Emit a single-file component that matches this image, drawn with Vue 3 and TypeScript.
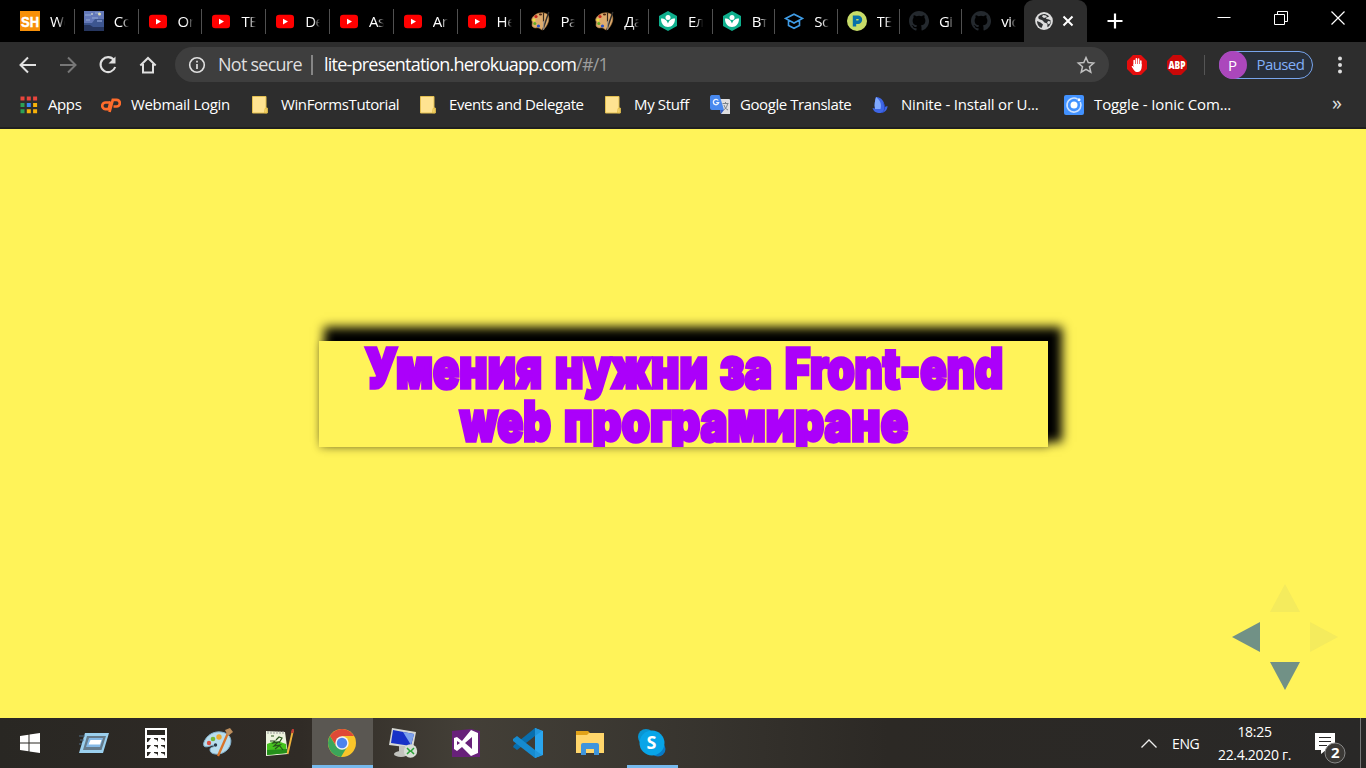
<script setup lang="ts">
interface Tab { icon: string; title: string; width: number }
interface Bookmark { icon: string; title: string; width: number; spacing: number }
interface Word { text: string; x: number; width: number }

const tabs: Tab[] = [
  { icon: 'sh', title: 'We', width: 63.8 },
  { icon: 'sky', title: 'Co', width: 63.8 },
  { icon: 'youtube', title: 'On', width: 63.8 },
  { icon: 'youtube', title: 'TE', width: 63.8 },
  { icon: 'youtube', title: 'De', width: 63.8 },
  { icon: 'youtube', title: 'As', width: 63.8 },
  { icon: 'youtube', title: 'An', width: 63.8 },
  { icon: 'youtube', title: 'He', width: 63.8 },
  { icon: 'palette', title: 'Pa', width: 63.8 },
  { icon: 'palette', title: 'Да', width: 63.8 },
  { icon: 'leaf', title: 'Ел', width: 63.8 },
  { icon: 'leaf', title: 'Вт', width: 62.4 },
  { icon: 'school', title: 'Sc', width: 62.4 },
  { icon: 'parking', title: 'TE', width: 62.4 },
  { icon: 'github', title: 'Gi', width: 62.4 },
  { icon: 'github', title: 'vic', width: 62.4 },
]

const bookmarks: Bookmark[] = [
  { icon: 'apps', title: 'Apps', width: 82, spacing: -0.4 },
  { icon: 'cpanel', title: 'Webmail Login', width: 150, spacing: -0.33 },
  { icon: 'folder', title: 'WinFormsTutorial', width: 168, spacing: -0.4 },
  { icon: 'folder', title: 'Events and Delegate', width: 185, spacing: -0.4 },
  { icon: 'folder', title: 'My Stuff', width: 106, spacing: -0.35 },
  { icon: 'translate', title: 'Google Translate', width: 161, spacing: -0.43 },
  { icon: 'ninite', title: 'Ninite - Install or U...', width: 193, spacing: -0.18 },
  { icon: 'ionic', title: 'Toggle - Ionic Com...', width: 180, spacing: -0.13 },
]

const heading: Word[][] = [
  [
    { text: 'Умения', x: 45, width: 179 },
    { text: 'нужни', x: 235, width: 155 },
    { text: 'за', x: 400, width: 54 },
    { text: 'Front-end', x: 465, width: 220 },
  ],
  [
    { text: 'web', x: 140, width: 93 },
    { text: 'програмиране', x: 244, width: 346 },
  ],
]
</script>

<template>
  <svg class="defs" aria-hidden="true">
    <defs>
      <symbol id="sh" viewBox="0 0 20 20"><rect width="20" height="20" fill="#f79009" /><text x="1" y="15.5" font-family="Liberation Sans" font-weight="700" font-size="15" textLength="18" lengthAdjust="spacingAndGlyphs" fill="#fff" stroke="#fff" stroke-width=".5">SH</text></symbol>
      <symbol id="sky" viewBox="0 0 20 20"><rect width="20" height="20" fill="#6378b8" /><path d="M0 12h8l3-4h9v12H0z" fill="#3d5690" /><path d="M0 14h6l3 2h11v4H0z" fill="#26365f" /><path d="M1 4h6M8 7h6M11 2h5M2 9h4M13 10h5" stroke="#8499cb" stroke-width="1.5" /><circle cx="15.500" cy="3" r="1.500" fill="#e1dfb0" /><circle cx="8" cy="3" r="1" fill="#c5cbd0" /></symbol>
      <symbol id="youtube" viewBox="0 0 20 20"><rect x="1" y="3.800" width="18" height="13.500" rx="3.300" fill="#f00" /><path d="M8 7.800v5.600l5-2.800z" fill="#fff" /></symbol>
      <symbol id="palette" viewBox="0 0 20 20"><path d="M5 4C9 1 15 1 18 4c2 4 0 10-4 14-2 2-3 0-5-1-3-1-3 1-6-1-2-1 0-4-1-6-1-1 0-4 3-6z" fill="#deac6e" stroke="#b98143" stroke-width=".6" /><circle cx="6" cy="5.500" r="1.600" fill="#c8281c" /><ellipse cx="10.500" cy="3.500" rx="1.600" ry="1" fill="#4d2512" /><circle cx="4" cy="9" r="1.500" fill="#eee43c" /><circle cx="4.800" cy="12.500" r="1.500" fill="#65ac25" /><circle cx="8.500" cy="15" r="1.600" fill="#2852c8" /><path d="M13.500 2v9" stroke="#37291d" stroke-width="1.200" /><path d="M18.800 1l-4 12-2 6" fill="none" stroke="#33302d" stroke-width="1.500" /><path d="M13.700 10v9" stroke="#99918a" stroke-width="1" /></symbol>
      <symbol id="leaf" viewBox="0 0 20 20"><path d="M10 0l9 5v10l-9 5-9-5V5z" fill="#0eaf8d" /><circle cx="10" cy="6.500" r="2.500" fill="#fff" /><path d="M3 7.500c4 0 6 2 7 5 1-3 3-5 7-5 0 5.500-3 8.500-7 8.500s-7-3-7-8.500z" fill="#fff" /></symbol>
      <symbol id="school" viewBox="0 0 20 20"><path d="M1.500 7.500L10 3.200l8.500 4.300L10 12zM4.500 9.500v5L10 17.300l5.500-2.800v-5" fill="none" stroke="#3f9ce6" stroke-width="1.600" /></symbol>
      <symbol id="parking" viewBox="0 0 20 20"><circle cx="10" cy="10" r="10" fill="#c7dc68" /><path d="M7.500 15.500V6.200H11a2.500 2.500 0 0 1 0 5H7" fill="none" stroke="#0870a8" stroke-width="3.400" /></symbol>
      <symbol id="github" viewBox="0 0 16 16"><path fill="#24292e" d="M8 0C3.580 0 0 3.580 0 8c0 3.540 2.290 6.530 5.470 7.590.4.070.55-.17.55-.38v-1.490c-2.230.49-2.700-.95-2.700-.95-.36-.92-.89-1.170-.89-1.170-.73-.5.060-.49.060-.49.8.060 1.230.83 1.230.83.720 1.210 1.870.86 2.330.66.070-.52.280-.86.500-1.060-1.780-.2-3.640-.89-3.640-3.950 0-.87.310-1.590.820-2.150-.08-.2-.36-1.020.08-2.120 0 0 .67-.21 2.200.82a7.500 7.500 0 0 1 4 0c1.530-1.040 2.200-.82 2.200-.82.440 1.100.16 1.920.08 2.120.51.56.82 1.270.82 2.150 0 3.070-1.870 3.750-3.650 3.950.29.250.54.730.54 1.480v2.190c0 .21.15.46.55.38A8 8 0 0 0 8 0z" /></symbol>
      <symbol id="apps" viewBox="0 0 20 20"><path d="M1.500 1.500h4v4h-4zm6.300 0h4v4h-4zm6.300 0h4v4h-4z" fill="#e8453c" /><path d="M1.500 8h4v4h-4zm0 6.300h4v4h-4z" fill="#2da055" /><path d="M7.800 8h4v4h-4z" fill="#3985f5" /><path d="M14.100 8h4v4h-4zm-6.300 6.300h4v4h-4zm6.300 0h4v4h-4z" fill="#f8b20a" /></symbol>
      <symbol id="cpanel" viewBox="0 0 20 20"><g fill="none" stroke="#ff6c2c" stroke-width="2.700"><path d="M9 7.500H4.800a3.300 3.300 0 0 0-.5 6.600h2M8.500 17l3.300-12.200h3.700a3.300 3.300 0 0 1 0 6.700h-3" /><path d="M9.500 6.500L7.800 14.100H6" /></g></symbol>
      <symbol id="folder" viewBox="0 0 20 20"><path d="M1.500 1.500H15v11.500h1.300v5H1.500z" fill="#ffe391" stroke="#e3bf50" /><path d="M14 13.500h2v4.300h-2.500z" fill="#f3d36e" stroke="#e0b93f" stroke-width=".7" /></symbol>
      <symbol id="translate" viewBox="0 0 20 20"><path d="M8 4h11a1 1 0 0 1 1 1v14h-9z" fill="#dededf" /><path d="M1.500 0h8l4.500 15H2a2 2 0 0 1-2-2V2A2 2 0 0 1 1.500 0z" fill="#4889ef" /><path d="M10 15h4l-3 4z" fill="#345bc0" /><path d="M8.300 5.500a2.700 2.700 0 1 0 .4 2.200H6.200" fill="none" stroke="#eaf3ff" stroke-width="1.300" /><path d="M12.500 8.500h6M15.500 7v1.500M17.500 9c-.6 3-2 5-4 6M14 10c1 3 2 4 4 5" fill="none" stroke="#78838b" stroke-width="1" /></symbol>
      <symbol id="ninite" viewBox="0 0 20 20"><path d="M5 2c6 0 9 6 8.500 10l3-1c0 4-3 7-7 7-5 0-7-2-8-5l2.500.5C3 10 4 6 5 2z" fill="#3e66e6" /><path d="M5 2c4 3 6 7 4.500 12H4C3 9 4 6 5 2z" fill="#7fa9ff" /><path d="M9.500 18c4-1 5-6 2-11 4 4 3 8 0 11z" fill="#2645bd" /></symbol>
      <symbol id="ionic" viewBox="0 0 20 20"><rect width="20" height="20" rx="2" fill="#4292ff" /><circle cx="10" cy="10" r="3.500" fill="#fff" /><path d="M13.500 4A7 7 0 1 0 16.300 7" fill="none" stroke="#cce2ff" stroke-width="1.600" /><circle cx="15" cy="4.800" r="1.500" fill="#fff" /></symbol>
    </defs>
  </svg>

  <main class="screen">
    <header class="tabstrip">
      <div v-for="(tab, i) in tabs" :key="i" class="tab" :style="{ width: tab.width + 'px' }">
        <svg class="icon"><use :href="'#' + tab.icon" /></svg>
        <span class="tab-title">{{ tab.title }}</span>
      </div>
      <div class="tab-active">
        <svg width="18" height="18" viewBox="0 0 18 18"><circle cx="9" cy="9" r="8.900" fill="#dcdcdc" /><path d="M10 2c1.500.5 3 1 4 2.500-1 1-2.500.5-3 1.500s1.500 1.200 3 1.500c1 .5 1.500 1 2 1.500 0 3-1.500 5-3.500 6.300-.5-1.800.5-2.800-.5-3.800-1.200-1-3-.5-3.500-2S6.500 8 5 7.500 3 6 3.500 4.500C5 2.800 7.500 1.800 10 2z" fill="#303234" /><path d="M2 9l3.500 1.500 2.500 2-1.500 3.500C3.500 15 2 12 2 9z" fill="#303234" /><path d="M8 3l3 .5 1 1.500-3 1-2-1.500zM13 9l3 .5-2 3-2-1.500z" fill="#dcdcdc" /></svg>
        <svg width="12" height="12" viewBox="0 0 12 12"><path d="M1.500 1.500l9 9m0-9l-9 9" stroke="#fff" stroke-width="2" /></svg>
      </div>
      <svg class="plus" width="16" height="16" viewBox="0 0 16 16"><path d="M8 .5v15M.5 8h15" stroke="#fff" stroke-width="2.200" /></svg>
      <div class="window-controls">
        <svg width="14" height="14" viewBox="0 0 14 14"><path d="M.5 6.500h13" stroke="#fff" /></svg>
        <svg width="14" height="14" viewBox="0 0 14 14"><path d="M.5 3.500h10v10H.5zM3.500 3V.5h10v10H11" fill="none" stroke="#fff" /></svg>
        <svg width="14" height="14" viewBox="0 0 14 14"><path d="M.5.5l13 13m0-13l-13 13" stroke="#fff" stroke-width="1.200" /></svg>
      </div>
    </header>

    <nav class="toolbar">
      <div class="nav-icons">
        <svg viewBox="0 0 20 20"><path d="M18 10H3M10 2.500L2.500 10l7.500 7.500" fill="none" stroke="#e0e0e0" stroke-width="2" /></svg>
        <svg viewBox="0 0 20 20"><path d="M2 10h15M10 2.500l7.500 7.500-7.500 7.500" fill="none" stroke="#777" stroke-width="2" /></svg>
        <svg viewBox="0 0 20 20"><path d="M16 5a7.500 7.500 0 1 0 1.200 7" fill="none" stroke="#e0e0e0" stroke-width="2.100" /><path d="M17.500 1.500V8.500H10.500z" fill="#e0e0e0" /></svg>
        <svg viewBox="0 0 20 20"><path d="M5 9v8.500h10V9M2.300 10.500L10 3l7.700 7.500" fill="none" stroke="#e0e0e0" stroke-width="2" /></svg>
      </div>
      <div class="omnibox">
        <svg width="18" height="18" viewBox="0 0 18 18"><circle cx="9" cy="9" r="7.300" fill="none" stroke="#e0e0e0" stroke-width="1.600" /><path d="M9 8v5M9 4.700v1.800" stroke="#e0e0e0" stroke-width="1.700" /></svg>
        <span class="security">Not secure</span>
        <i class="divider" />
        <span class="url">lite-presentation.herokuapp.com<b>/#/1</b></span>
        <svg class="star" width="20" height="20" viewBox="0 0 20 20"><path d="M10 2.500l2.200 5 5.500.5-4.200 3.700 1.300 5.500-4.800-2.900-4.800 2.900 1.300-5.500L2.300 8l5.500-.5z" fill="none" stroke="#c0c0c0" stroke-width="1.500" /></svg>
      </div>
      <div class="extensions">
        <svg width="20" height="20" viewBox="0 0 20 20"><path d="M6 0h8l6 6v8l-6 6H6l-6-6V6z" fill="#e40d0d" /><path d="M7.200 11V5.500M9.400 10V3.700M11.600 10V4M13.800 11V6" stroke="#fff" stroke-width="1.600" stroke-linecap="round" /><path d="M6.400 9h8.200v4q-.8 4-4 4c-3 0-3.800-2-6-5.500 1-1 1.500-.3 2.500.7z" fill="#fff" /></svg>
        <svg width="20" height="20" viewBox="0 0 20 20"><path d="M6 0h8l6 6v8l-6 6H6l-6-6V6z" fill="#cb0808" /><text x="1.500" y="13.800" textLength="17" lengthAdjust="spacingAndGlyphs" font-family="Open Sans" font-size="10" font-weight="800" fill="#fff">ABP</text></svg>
      </div>
      <i class="toolbar-divider" />
      <div class="profile"><span class="avatar">P</span><span class="paused">Paused</span></div>
      <svg class="menu" width="4" height="18" viewBox="0 0 4 18"><circle cx="2" cy="2.500" r="2" fill="#ddd" /><circle cx="2" cy="9" r="2" fill="#ddd" /><circle cx="2" cy="15.500" r="2" fill="#ddd" /></svg>
    </nav>

    <nav class="bookmarks">
      <div v-for="b in bookmarks" :key="b.title" class="bookmark" :style="{ width: b.width + 'px', letterSpacing: b.spacing + 'px' }">
        <svg class="icon"><use :href="'#' + b.icon" /></svg>
        <span>{{ b.title }}</span>
      </div>
      <span class="overflow">»</span>
    </nav>

    <section class="slide">
      <h1 class="title">
        <svg v-for="(line, i) in heading" :key="i" width="729" height="53">
          <text v-for="word in line" :key="word.text" :x="word.x + 1" y="47" :textLength="word.width - 2" lengthAdjust="spacingAndGlyphs">{{ word.text }}</text>
        </svg>
      </h1>
      <svg class="controls" width="106" height="106" viewBox="0 0 106 106">
        <g fill="#719186"><path d="M28 38v30L0 53z" /><path d="M38 78h30L53 106z" /><path d="M38 28h30L53 0z" opacity=".08" /><path d="M78 38v30l28-15z" opacity=".08" /></g>
      </svg>
    </section>

    <footer class="taskbar">
      <div class="task"><svg width="20" height="20" viewBox="0 0 20 20"><path d="M0 3l8.500-1.200v7.700H0zm9.500-1.400L20 0v9.500H9.500zM0 10.500h8.500v7.700L0 17zm9.500 0H20V20L9.500 18.400z" fill="#fff" /></svg></div>
      <div class="task"><svg width="30" height="22" viewBox="0 0 30 22"><path d="M6 1h24l-6 20H0z" fill="#9bd0ee" /><path d="M8 4h19l-4.500 14H4z" fill="#657b8b" /><path d="M10 6h14l-3 9H7z" fill="#85b9e5" /><path d="M11.500 8h11l-1.500 4.500H9.500z" fill="#fff" /><path d="M0 4h6M1 8h4M0 12h3" stroke="#536d83" /></svg></div>
      <div class="task"><svg width="22" height="30" viewBox="0 0 22 30"><path d="M0 0h22v30H0z" fill="#fff" /><path d="M2 2h18v5H2zM2 10h4l-3 4H2zm7 0h4v4l-1-2-3-1zm7 0h4v4l-1-2-3-1zM2 17h4l-3 4H2zm7 0h4v4l-1-2-3-1zm7 0h4v4l-1-2-3-1zM2 24h4l-3 4H2zm7 0h4v4l-1-2-3-1zm7 0h4v4l-1-2-3-1z" fill="#292723" /></svg></div>
      <div class="task"><svg width="30" height="30" viewBox="0 0 30 30"><path d="M2 12C6 5 14 2 22 5c8 3 7 12 2 17-6 6-17 5-17 0 0-4 4-2 4-4 0-3-7 3-10 0-1-2 0-4 1-6z" fill="#b8dded" stroke="#82b0cc" /><circle cx="6" cy="15" r="2.200" fill="#d95042" /><circle cx="10" cy="11" r="2.300" fill="#76b936" /><circle cx="16" cy="9" r="2.700" fill="#eca932" /><circle cx="12.500" cy="17" r="1.700" fill="#283746" /><path d="M25 5L15 28" stroke="#d87329" stroke-width="2.300" /><path d="M22 2l5-2 3 4-5 4z" fill="#bd8e5d" /></svg></div>
      <div class="task"><svg width="28" height="28" viewBox="0 0 28 28"><path d="M0 2l19 1 3 22-22 2z" fill="#edf3df" /><path d="M1 15q9-5 19 0l1 9-20 2z" fill="#45c41e" /><path d="M1 21l20-1v4L1 26z" fill="#248f1b" /><path d="M4 12h5l-2 2 5-1-4 4 6-1-5 4M10 11l3-3 3 1-3 5M13 16l4 5M5 7h3" stroke="#28551c" fill="none" stroke-width="1.200" /><path d="M2 2v3m3-3v3m3-3v3m3-3v3m3-3v3m3-3v3" stroke="#999" /><path d="M27 1L21.500 25" stroke="#f0b33b" stroke-width="1.900" /><path d="M27.200 0L26 4" stroke="#c13b34" stroke-width="2.300" /></svg></div>
      <div class="task selected"><svg width="28" height="28" viewBox="0 0 28 28"><circle cx="14" cy="14" r="14" fill="#f9c52a" /><path d="M1.900 7A14 14 0 0 1 26.100 7H14L9 18z" fill="#df4937" /><path d="M1.900 7A14 14 0 0 0 13 28l6-10-11-1z" fill="#3ba65a" /><circle cx="14" cy="14" r="6.700" fill="#f2f2f2" /><circle cx="14" cy="14" r="5.200" fill="#4b83ed" /></svg></div>
      <div class="task"><svg width="30" height="30" viewBox="0 0 30 30"><path d="M3 0l24 4-3 16L0 17z" fill="#d6d8d4" /><path d="M4 2l21 4-3 12L2 15z" fill="#1731c7" /><path d="M14 4l11 2-3 11z" fill="#7da2ec" /><ellipse cx="12" cy="26" rx="7" ry="3" fill="#c2c3be" /><path d="M10 18h6v7h-6z" fill="#c2c3be" /><circle cx="21.500" cy="23" r="6.700" fill="#d7ddd5" /><path d="M18 20l3 3-3 3m7-6l-3 3 3 3" stroke="#29a236" stroke-width="1.500" fill="none" /></svg></div>
      <div class="task"><svg width="28" height="28" viewBox="0 0 28 28"><path d="M0 2l19-2 9 2v26H0z" fill="#68217a" /><path fill-rule="evenodd" d="M2 9l3-1 5 4 9-11 7 3v20l-7 3-9-9-5 4-3-2zM5 12v4l3-2zm8 2l7 6V8z" fill="#fff" /></svg></div>
      <div class="task"><svg width="30" height="30" viewBox="0 0 30 30"><path d="M22 0l8 3v24l-8 3z" fill="#2aa5ee" /><path d="M22 0v8L4 22l-4-3 1-2z" fill="#086ead" /><path d="M22 30v-8L4 8l-4 3v2z" fill="#168bd0" /><path d="M22 0l7 3-7 5zM22 22l7 5-7 3z" fill="#2196dc" /></svg></div>
      <div class="task"><svg width="28" height="24" viewBox="0 0 28 24"><path d="M0 0h12l3 3h12v19H0z" fill="#e1a219" /><path d="M0 4h11l2-2h15v20H0z" fill="#ffd66b" /><path d="M5 24V14q0-2 2-2h14q2 0 2 2v10h-5v-6h-8v6z" fill="#3e95dd" /></svg></div>
      <div class="task skype"><svg width="28" height="28" viewBox="0 0 28 28"><circle cx="8" cy="8" r="8" fill="#0795d2" /><circle cx="20" cy="20" r="7.500" fill="#0879c5" /><circle cx="14" cy="14" r="12.500" fill="#08a5e8" /><text x="8.500" y="20" font-family="Open Sans" font-size="18" font-weight="700" fill="#fff">S</text></svg></div>
      <div class="tray">
        <svg width="16" height="9" viewBox="0 0 16 9"><path d="M.5 8.500L8 1l7.500 7.500" fill="none" stroke="#eee" stroke-width="1.300" /></svg>
        <span class="language">ENG</span>
        <div class="clock"><span>18:25</span><span class="date">22.4.2020 г.</span></div>
        <svg class="notice" width="32" height="32" viewBox="0 0 32 32"><path d="M0 0h20v17h-9l-5 4v-4H0z" fill="#fff" /><path d="M4 4.500h12m-12 4h12m-12 4h8" stroke="#292827" /><circle cx="20" cy="20" r="10" fill="#3b3936" stroke="#888" /><text x="16" y="25.300" font-family="Open Sans" font-size="15" font-weight="700" fill="#fff">2</text></svg>
        <i class="show-desktop" />
      </div>
    </footer>
  </main>
</template>

<style>
body { margin: 0; overflow: hidden; }
</style>

<style scoped>
* { box-sizing: border-box; }
svg { display: block; flex-shrink: 0; }
.defs { position: absolute; width: 0; height: 0; }
.screen { width: 1366px; height: 768px; display: flex; flex-direction: column; font-family: "Open Sans", "Noto Sans", sans-serif; background: #fff359; overflow: hidden; }
.icon { width: 20px; height: 20px; }
.tabstrip { height: 42px; display: flex; background: #000; padding-left: 11px; flex-shrink: 0; }
.tab { display: flex; align-items: center; gap: 10px; padding-left: 9px; flex-shrink: 0; height: 42px; background: linear-gradient(#505050, #505050) right 9px / 1px 25px no-repeat; }
.tab:nth-child(16) { background: none; }
.tab-title { width: 15px; margin-top: -1px; overflow: hidden; color: #fff; font-size: 15px; letter-spacing: -.5px; white-space: nowrap; mask-image: linear-gradient(90deg, #000 55%, transparent); }
.tab-active { width: 63px; margin-left: -1px; display: flex; align-items: center; gap: 9px; padding-left: 11px; background: #2d2d2d; border-radius: 9px 9px 0 0; }
.plus { margin: 13px 0 0 20px; }
.window-controls { margin: 11px 21px 0 auto; display: flex; gap: 43px; }
.toolbar { height: 45px; background: #2d2d2d; display: flex; align-items: center; padding-left: 18px; flex-shrink: 0; }
.nav-icons { width: 157px; display: flex; gap: 20px; }
.nav-icons svg { width: 20px; height: 20px; }
.omnibox { width: 934px; height: 35px; border-radius: 18px; background: #3e3e3e; display: flex; align-items: center; padding: 0 13px 0 13px; font-size: 18px; line-height: 33px; color: #dedede; white-space: nowrap; }
.omnibox span { padding-bottom: 1px; }
.security { margin-left: 12px; width: 93px; letter-spacing: -.75px; }
.divider { width: 2px; height: 20px; background: #868686; margin-right: 11px; }
.url { color: #fff; letter-spacing: -.78px; }
.url span, .url b { font-weight: 400; color: #9d9d9d; }
.star { margin-left: auto; }
.extensions { display: flex; gap: 20px; margin-left: 17.500px; }
.toolbar-divider { width: 1px; height: 20px; background: #555; margin: 0 14px 0 17px; }
.profile { width: 94px; height: 28px; border: 1.500px solid #78a5ed; border-radius: 14px; display: flex; align-items: center; gap: 10px; color: #82aff8; font-size: 15px; background: #29303b; }
.avatar { width: 28px; height: 28px; margin: -1px 0 -1px -1px; border-radius: 50%; background: #ab47bc; color: #fff; display: flex; align-items: center; justify-content: center; }
.paused { letter-spacing: -.6px; padding-bottom: 1px; }
.menu { margin-left: 25px; }
.bookmarks { height: 42px; padding: 0 0 5px 19px; background: #2d2d2d; border-bottom: 2px solid #202020; display: flex; align-items: center; flex-shrink: 0; }
.bookmark { display: flex; align-items: center; gap: 10px; flex-shrink: 0; font-size: 15px; color: #fff; white-space: nowrap; }
.bookmark span { margin-top: -2px; }
.bookmark:first-child { gap: 9px; }
.overflow { color: #e0e0e0; font-size: 20px; margin: -4px 0 0 88px; }
.slide { height: 589px; padding: 212px 0 0 319px; background: #fff359; position: relative; flex-shrink: 0; }
.title { width: 729px; height: 106px; margin: 0; background: #fff359; box-shadow: 9.500px -9.500px 10px 4.500px #000, 0 2px 8px rgba(0, 0, 0, .22); overflow: hidden; }
.title svg:first-child { overflow: visible; }
.title text { font: 900 55px Inter, sans-serif; fill: #ab00fa; stroke: #ab00fa; stroke-width: 3.500px; }
.controls { position: absolute; right: 28px; bottom: 28px; }
.taskbar { height: 50px; display: flex; background: linear-gradient(90deg, #292723, #302b26 22%, #433f37 34%, #393630 48%, #2c2925 65%, #292827); color: #fff; flex-shrink: 0; }
.task { width: 62px; height: 50px; display: flex; align-items: center; justify-content: center; flex-shrink: 0; }
.task:first-child { width: 60px; }
.task:nth-child(2) { width: 65px; padding-left: 3px; }
.task.selected { background: #5a5752; border-bottom: 3px solid #76b9ed; width: 61px; margin-left: 1px; padding: 3px 1px 0 0; }
.task.skype { width: 51px; margin-left: 6px; border-bottom: 3px solid #76b9ed; padding: 3px 1px 0 0; }
.tray { flex: 1; margin-left: 463px; display: flex; align-items: center; font-size: 14px; }
.language { margin-left: 15px; width: 30px; letter-spacing: -.4px; }
.clock { width: 77px; margin-left: 14px; display: flex; flex-direction: column; align-items: center; line-height: 23px; white-space: nowrap; letter-spacing: -.3px; margin-top: -1px; }
.notice { margin: 12px 0 0 22px; }
.show-desktop { width: 1px; height: 50px; background: #777; margin-left: 13px; }
</style>
